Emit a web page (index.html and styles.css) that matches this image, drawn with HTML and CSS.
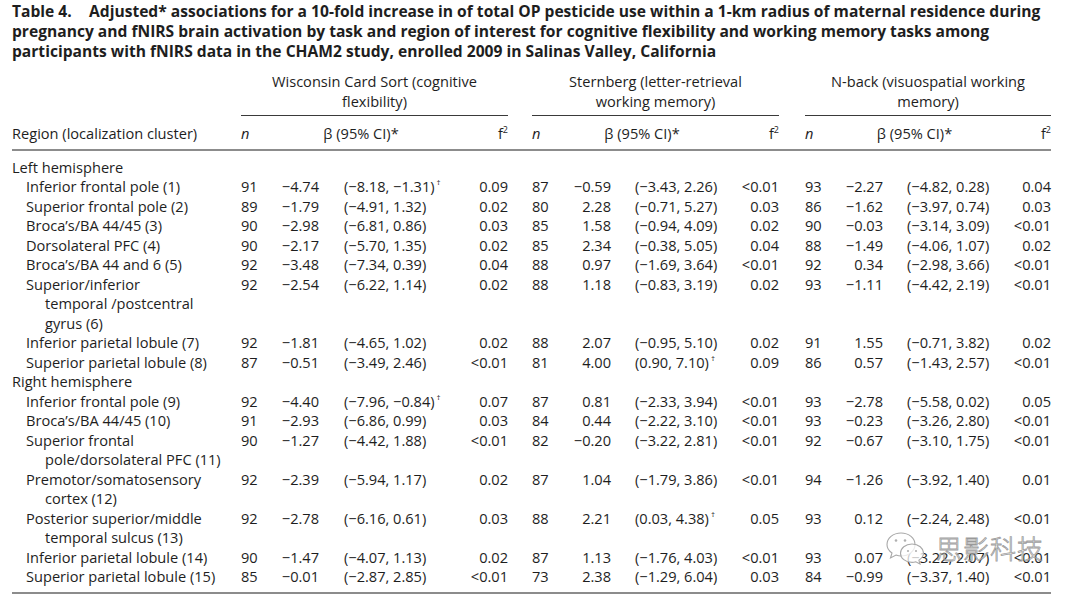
FILE: index.html
```html
<!DOCTYPE html>
<html lang="en">
<head>
<meta charset="utf-8">
<title>Table 4</title>
<link rel="stylesheet" href="styles.css">
</head>
<body>
<main class="page">
  <h1 class="title"><span class="label">Table 4.</span>Adjusted* associations for a 10-fold increase in of total OP pesticide use within a 1-km radius of maternal residence during<br>pregnancy and fNIRS brain activation by task and region of interest for cognitive flexibility and working memory tasks among<br>participants with fNIRS data in the CHAM2 study, enrolled 2009 in Salinas Valley, California</h1>

  <div class="table">
    <div class="row groups">
      <div class="grp g1">Wisconsin Card Sort (cognitive<br>flexibility)</div>
      <div class="grp g2">Sternberg (letter-retrieval<br>working memory)</div>
      <div class="grp g3">N-back (visuospatial working<br>memory)</div>
    </div>

    <div class="row heads">
      <div class="region-h">Region (localization cluster)</div>
      <div class="c2 n-h">n</div><div class="beta-h h1">β (95% CI)*</div><div class="c5 f">f<sup>2</sup></div>
      <div class="c7 n-h">n</div><div class="beta-h h2">β (95% CI)*</div><div class="c10 f">f<sup>2</sup></div>
      <div class="c12 n-h">n</div><div class="beta-h h3">β (95% CI)*</div><div class="c15 f">f<sup>2</sup></div>
    </div>

    <div class="tbody">
      <div class="row section"><div class="sec">Left hemisphere</div></div>

      <div class="row"><div class="reg">Inferior frontal pole (1)</div>
        <div class="c2">91</div><div class="c3 b">−4.74</div><div class="c4 ci">(−8.18, −1.31)<sup class="dg">†</sup></div><div class="c5 f">0.09</div>
        <div class="c7">87</div><div class="c8 b">−0.59</div><div class="c9 ci">(−3.43, 2.26)</div><div class="c10 f">&lt;0.01</div>
        <div class="c12">93</div><div class="c13 b">−2.27</div><div class="c14 ci">(−4.82, 0.28)</div><div class="c15 f">0.04</div></div>

      <div class="row"><div class="reg">Superior frontal pole (2)</div>
        <div class="c2">89</div><div class="c3 b">−1.79</div><div class="c4 ci">(−4.91, 1.32)</div><div class="c5 f">0.02</div>
        <div class="c7">80</div><div class="c8 b">2.28</div><div class="c9 ci">(−0.71, 5.27)</div><div class="c10 f">0.03</div>
        <div class="c12">86</div><div class="c13 b">−1.62</div><div class="c14 ci">(−3.97, 0.74)</div><div class="c15 f">0.03</div></div>

      <div class="row"><div class="reg">Broca’s/BA 44/45 (3)</div>
        <div class="c2">90</div><div class="c3 b">−2.98</div><div class="c4 ci">(−6.81, 0.86)</div><div class="c5 f">0.03</div>
        <div class="c7">85</div><div class="c8 b">1.58</div><div class="c9 ci">(−0.94, 4.09)</div><div class="c10 f">0.02</div>
        <div class="c12">90</div><div class="c13 b">−0.03</div><div class="c14 ci">(−3.14, 3.09)</div><div class="c15 f">&lt;0.01</div></div>

      <div class="row"><div class="reg">Dorsolateral PFC (4)</div>
        <div class="c2">90</div><div class="c3 b">−2.17</div><div class="c4 ci">(−5.70, 1.35)</div><div class="c5 f">0.02</div>
        <div class="c7">85</div><div class="c8 b">2.34</div><div class="c9 ci">(−0.38, 5.05)</div><div class="c10 f">0.04</div>
        <div class="c12">88</div><div class="c13 b">−1.49</div><div class="c14 ci">(−4.06, 1.07)</div><div class="c15 f">0.02</div></div>

      <div class="row"><div class="reg">Broca’s/BA 44 and 6 (5)</div>
        <div class="c2">92</div><div class="c3 b">−3.48</div><div class="c4 ci">(−7.34, 0.39)</div><div class="c5 f">0.04</div>
        <div class="c7">88</div><div class="c8 b">0.97</div><div class="c9 ci">(−1.69, 3.64)</div><div class="c10 f">&lt;0.01</div>
        <div class="c12">92</div><div class="c13 b">0.34</div><div class="c14 ci">(−2.98, 3.66)</div><div class="c15 f">&lt;0.01</div></div>

      <div class="row"><div class="reg">Superior/inferior<br>temporal /postcentral<br>gyrus (6)</div>
        <div class="c2">92</div><div class="c3 b">−2.54</div><div class="c4 ci">(−6.22, 1.14)</div><div class="c5 f">0.02</div>
        <div class="c7">88</div><div class="c8 b">1.18</div><div class="c9 ci">(−0.83, 3.19)</div><div class="c10 f">0.02</div>
        <div class="c12">93</div><div class="c13 b">−1.11</div><div class="c14 ci">(−4.42, 2.19)</div><div class="c15 f">&lt;0.01</div></div>

      <div class="row"><div class="reg">Inferior parietal lobule (7)</div>
        <div class="c2">92</div><div class="c3 b">−1.81</div><div class="c4 ci">(−4.65, 1.02)</div><div class="c5 f">0.02</div>
        <div class="c7">88</div><div class="c8 b">2.07</div><div class="c9 ci">(−0.95, 5.10)</div><div class="c10 f">0.02</div>
        <div class="c12">91</div><div class="c13 b">1.55</div><div class="c14 ci">(−0.71, 3.82)</div><div class="c15 f">0.02</div></div>

      <div class="row"><div class="reg">Superior parietal lobule (8)</div>
        <div class="c2">87</div><div class="c3 b">−0.51</div><div class="c4 ci">(−3.49, 2.46)</div><div class="c5 f">&lt;0.01</div>
        <div class="c7">81</div><div class="c8 b">4.00</div><div class="c9 ci">(0.90, 7.10)<sup class="dg">†</sup></div><div class="c10 f">0.09</div>
        <div class="c12">86</div><div class="c13 b">0.57</div><div class="c14 ci">(−1.43, 2.57)</div><div class="c15 f">&lt;0.01</div></div>

      <div class="row section"><div class="sec">Right hemisphere</div></div>

      <div class="row"><div class="reg">Inferior frontal pole (9)</div>
        <div class="c2">92</div><div class="c3 b">−4.40</div><div class="c4 ci">(−7.96, −0.84)<sup class="dg">†</sup></div><div class="c5 f">0.07</div>
        <div class="c7">87</div><div class="c8 b">0.81</div><div class="c9 ci">(−2.33, 3.94)</div><div class="c10 f">&lt;0.01</div>
        <div class="c12">93</div><div class="c13 b">−2.78</div><div class="c14 ci">(−5.58, 0.02)</div><div class="c15 f">0.05</div></div>

      <div class="row"><div class="reg">Broca’s/BA 44/45 (10)</div>
        <div class="c2">91</div><div class="c3 b">−2.93</div><div class="c4 ci">(−6.86, 0.99)</div><div class="c5 f">0.03</div>
        <div class="c7">84</div><div class="c8 b">0.44</div><div class="c9 ci">(−2.22, 3.10)</div><div class="c10 f">&lt;0.01</div>
        <div class="c12">93</div><div class="c13 b">−0.23</div><div class="c14 ci">(−3.26, 2.80)</div><div class="c15 f">&lt;0.01</div></div>

      <div class="row"><div class="reg">Superior frontal<br>pole/dorsolateral PFC (11)</div>
        <div class="c2">90</div><div class="c3 b">−1.27</div><div class="c4 ci">(−4.42, 1.88)</div><div class="c5 f">&lt;0.01</div>
        <div class="c7">82</div><div class="c8 b">−0.20</div><div class="c9 ci">(−3.22, 2.81)</div><div class="c10 f">&lt;0.01</div>
        <div class="c12">92</div><div class="c13 b">−0.67</div><div class="c14 ci">(−3.10, 1.75)</div><div class="c15 f">&lt;0.01</div></div>

      <div class="row"><div class="reg">Premotor/somatosensory<br>cortex (12)</div>
        <div class="c2">92</div><div class="c3 b">−2.39</div><div class="c4 ci">(−5.94, 1.17)</div><div class="c5 f">0.02</div>
        <div class="c7">87</div><div class="c8 b">1.04</div><div class="c9 ci">(−1.79, 3.86)</div><div class="c10 f">&lt;0.01</div>
        <div class="c12">94</div><div class="c13 b">−1.26</div><div class="c14 ci">(−3.92, 1.40)</div><div class="c15 f">0.01</div></div>

      <div class="row"><div class="reg">Posterior superior/middle<br>temporal sulcus (13)</div>
        <div class="c2">92</div><div class="c3 b">−2.78</div><div class="c4 ci">(−6.16, 0.61)</div><div class="c5 f">0.03</div>
        <div class="c7">88</div><div class="c8 b">2.21</div><div class="c9 ci">(0.03, 4.38)<sup class="dg">†</sup></div><div class="c10 f">0.05</div>
        <div class="c12">93</div><div class="c13 b">0.12</div><div class="c14 ci">(−2.24, 2.48)</div><div class="c15 f">&lt;0.01</div></div>

      <div class="row"><div class="reg">Inferior parietal lobule (14)</div>
        <div class="c2">90</div><div class="c3 b">−1.47</div><div class="c4 ci">(−4.07, 1.13)</div><div class="c5 f">0.02</div>
        <div class="c7">87</div><div class="c8 b">1.13</div><div class="c9 ci">(−1.76, 4.03)</div><div class="c10 f">&lt;0.01</div>
        <div class="c12">93</div><div class="c13 b">0.07</div><div class="c14 ci">(−3.22, 2.07)</div><div class="c15 f">&lt;0.01</div></div>

      <div class="row"><div class="reg">Superior parietal lobule (15)</div>
        <div class="c2">85</div><div class="c3 b">−0.01</div><div class="c4 ci">(−2.87, 2.85)</div><div class="c5 f">&lt;0.01</div>
        <div class="c7">73</div><div class="c8 b">2.38</div><div class="c9 ci">(−1.29, 6.04)</div><div class="c10 f">0.03</div>
        <div class="c12">84</div><div class="c13 b">−0.99</div><div class="c14 ci">(−3.37, 1.40)</div><div class="c15 f">&lt;0.01</div></div>
    </div>
  </div>

  <div class="watermark" aria-hidden="true">
    <svg class="wm-icon" width="38" height="34" viewBox="0 0 38 34">
      <path d="M15 2 C7 2 1 7.2 1 13.5 C1 17 3 20 6 22 L4.5 27 L10 24 C11.6 24.6 13.3 25 15 25 C23 25 29 19.8 29 13.5 C29 7.2 23 2 15 2 Z" fill="rgba(255,255,255,0.6)" stroke="#a8a8a8" stroke-width="1.1"/>
      <circle cx="10" cy="9.5" r="1.3" fill="#b0b0b0"/>
      <circle cx="19" cy="9.5" r="1.3" fill="#b0b0b0"/>
      <path d="M26 13 C19.4 13 14.5 17.2 14.5 22.2 C14.5 27.2 19.4 31.4 26 31.4 C27.3 31.4 28.6 31.2 29.8 30.8 L34 33 L32.9 29.2 C35.4 27.5 37.5 25 37.5 22.2 C37.5 17.2 32.6 13 26 13 Z" fill="rgba(255,255,255,0.75)" stroke="#a8a8a8" stroke-width="1.1"/>
      <circle cx="22" cy="20" r="1.1" fill="#b0b0b0"/>
      <circle cx="30" cy="20" r="1.1" fill="#b0b0b0"/>
    </svg>
    <span class="wm-text">思影科技</span>
  </div>
</main>
</body>
</html>
```
FILE: styles.css
```css
* { box-sizing: border-box; }

body {
  margin: 0;
  background: #ffffff;
  color: #1e1e1e;
  font-family: "Open Sans", "Noto Sans", sans-serif;
}

.page {
  position: relative;
  width: 1080px;
  padding: 1px 0 0 12px;
}

.title {
  margin: 0;
  font-size: 15.6px;
  font-weight: 700;
  line-height: 20px;
  white-space: nowrap;
}

.title .label {
  display: inline-block;
  width: 77px;
}

.table {
  width: 1039px;
  margin-top: 11px;
  font-size: 14.6px;
  line-height: 19.5px;
  white-space: nowrap;
}

.row {
  display: grid;
  grid-template-columns: 229px 25px 53px 149px 40px 24px 25px 54px 128px 40px 26px 25px 53px 128px 40px;
}

/* group headings */
.grp {
  text-align: center;
  border-bottom: 1px solid #3a3a3a;
  padding-bottom: 4px;
}
.g1 { grid-column: 2 / span 4; }
.g2 { grid-column: 7 / span 4; }
.g3 { grid-column: 12 / span 4; }

/* column headings */
.heads {
  padding: 8px 0 5px;
  border-bottom: 2px solid #8c8c8c;
}
.region-h { grid-column: 1; }
.n-h { font-style: italic; }
.beta-h {
  text-align: center;
  padding-right: 12px;
}
.h1 { grid-column: 3 / span 2; }
.h2 { grid-column: 8 / span 2; }
.h3 { grid-column: 13 / span 2; }

sup {
  font-size: 9px;
  line-height: 0;
  vertical-align: 6px;
}

.dg {
  font-size: 8px;
  margin-left: 2px;
  vertical-align: 7px;
}

/* body */
.tbody {
  padding: 7px 0 5px;
  border-bottom: 2px solid #8c8c8c;
}

.sec { grid-column: 1 / -1; }

.reg {
  grid-column: 1;
  padding-left: 33px;
  text-indent: -19px;
}

.c2 { grid-column: 2; }
.c3 { grid-column: 3; }
.c4 { grid-column: 4; }
.c5 { grid-column: 5; }
.c7 { grid-column: 7; }
.c8 { grid-column: 8; }
.c9 { grid-column: 9; }
.c10 { grid-column: 10; }
.c12 { grid-column: 12; }
.c13 { grid-column: 13; }
.c14 { grid-column: 14; }
.c15 { grid-column: 15; }

.b, .f { text-align: right; }
.ci { padding-left: 24px; }
.c4.ci { padding-left: 25px; }

/* watermark overlay */
.watermark {
  position: absolute;
  left: 886px;
  top: 531px;
  display: flex;
  align-items: center;
  gap: 12px;
  pointer-events: none;
}

.wm-text {
  font-family: "Noto Sans CJK SC", sans-serif;
  font-size: 26px;
  font-weight: 300;
  letter-spacing: 1px;
  line-height: 30px;
  color: rgba(255, 255, 255, 0.55);
  -webkit-text-stroke: 0.8px rgba(120, 120, 120, 0.75);
}
```
